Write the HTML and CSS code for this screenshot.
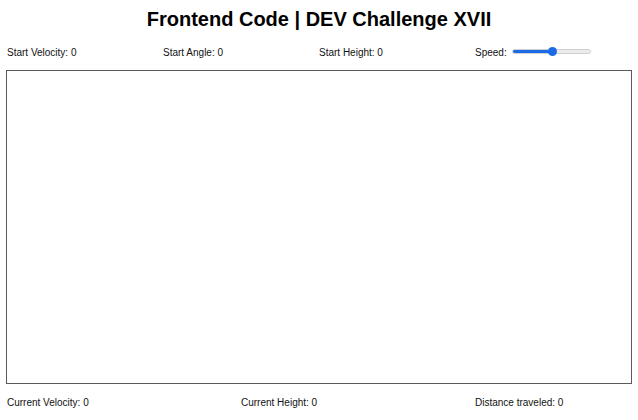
FILE: index.html
```html
<!DOCTYPE html>
<html lang="en">
<head>
<meta charset="utf-8">
<title>Frontend Code | DEV Challenge XVII</title>
<link rel="stylesheet" href="styles.css">
</head>
<body>
<div class="app">
  <h1 class="title">Frontend Code | DEV Challenge XVII</h1>
  <div class="controls">
    <div class="stat">Start Velocity: 0</div>
    <div class="stat">Start Angle: 0</div>
    <div class="stat">Start Height: 0</div>
    <div class="stat speed">
      <span>Speed:</span>
      <input class="slider" type="range" min="0" max="100" value="52">
    </div>
  </div>
  <div class="canvas"></div>
  <div class="results">
    <div class="stat">Current Velocity: 0</div>
    <div class="stat">Current Height: 0</div>
    <div class="stat">Distance traveled: 0</div>
  </div>
</div>
</body>
</html>
```

FILE: styles.css
```css
html, body {
  margin: 0;
  padding: 0;
  background: #ffffff;
}

body {
  font-family: "Liberation Sans", Arial, Helvetica, sans-serif;
  color: #111111;
}

.app {
  padding: 8px 6px 0;
}

.title {
  margin: 0;
  font-size: 20px;
  font-weight: bold;
  line-height: 23px;
  text-align: center;
  color: #000000;
}

.controls {
  margin-top: 15px;
  padding: 0 1px;
  display: grid;
  grid-template-columns: repeat(4, 1fr);
  height: 14px;
  font-size: 10px;
  line-height: 14px;
}

.stat {
  white-space: nowrap;
}

.speed {
  display: flex;
  align-items: center;
  gap: 5px;
}

.slider {
  -webkit-appearance: none;
  appearance: none;
  margin: 0 0 4px 0;
  padding: 0;
  width: 79px;
  height: 5px;
  border-radius: 3px;
  border: 1px solid #cfcfcf;
  box-sizing: border-box;
  background: linear-gradient(to right, #1b6ae6 0%, #1b6ae6 52%, #ececec 52%, #ececec 100%);
  outline: none;
}

.slider::-webkit-slider-thumb {
  -webkit-appearance: none;
  appearance: none;
  width: 9px;
  height: 9px;
  border-radius: 50%;
  background: #1b6ae6;
  border: none;
}

.canvas {
  margin-top: 10px;
  height: 314px;
  border: 1px solid #5a5a5a;
  box-sizing: border-box;
  background: #ffffff;
}

.results {
  margin-top: 13px;
  padding: 0 1px;
  display: grid;
  grid-template-columns: 1.5fr 1.5fr 1fr;
  font-size: 10px;
  line-height: 12px;
}
```
